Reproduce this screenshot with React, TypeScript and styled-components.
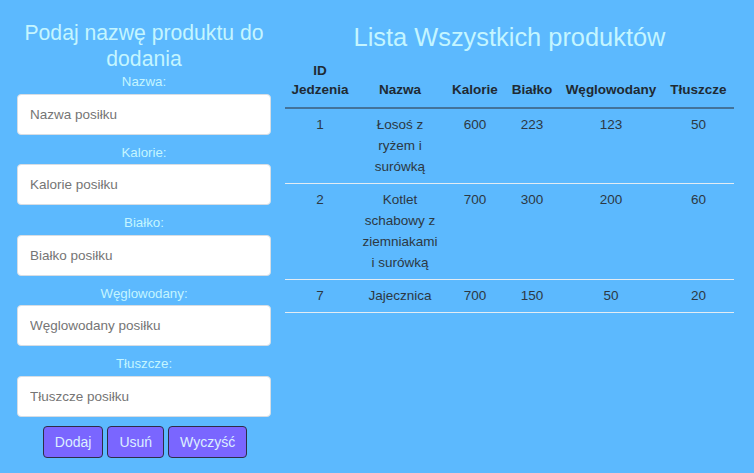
import React from "react";
import styled, { createGlobalStyle } from "styled-components";

const Global = createGlobalStyle`
  html, body { margin: 0; padding: 0; background: #5cb9fe; }
  body { font-family: "Liberation Sans", Arial, sans-serif; }
  * { box-sizing: border-box; }
`;

const Page = styled.div`
  display: flex;
  gap: 14px;
  padding: 0 20px 0 17px;
  min-height: 473px;
  background: #5cb9fe;
`;

const FormColumn = styled.div`
  width: 254px;
  display: flex;
  flex-direction: column;
  align-items: stretch;
`;

const Title = styled.h2<{ $size: number; $lh: number; $top: number }>`
  margin: ${(p) => p.$top}px 0 1px;
  font-weight: 400;
  font-size: ${(p) => p.$size}px;
  line-height: ${(p) => p.$lh}px;
  color: #c4f5ff;
  text-align: center;
`;

const Field = styled.div<{ $first?: boolean }>`
  display: flex;
  flex-direction: column;
  padding-top: ${(p) => (p.$first ? 0 : 9)}px;
`;

const Label = styled.label`
  display: block;
  text-align: center;
  font-size: 13.3px;
  line-height: 18px;
  color: #c4f5ff;
  margin-bottom: 2.5px;
`;

const Input = styled.input`
  height: 41px;
  width: 100%;
  border: 1px solid #d6dde4;
  border-radius: 4px;
  background: #fff;
  padding: 0 12px;
  font-family: "Liberation Sans", Arial, sans-serif;
  font-size: 13.5px;
  color: #333;
  outline: none;
  &::placeholder { color: #757575; }
`;

const Buttons = styled.div`
  display: flex;
  justify-content: center;
  gap: 4px;
  margin-top: 9px;
  padding-left: 2px;
`;

const Button = styled.button`
  height: 32px;
  padding: 0 11px;
  background: #7a66ff;
  border: 1px solid #2e2e46;
  border-radius: 4px;
  color: #dcefff;
  font-family: "Liberation Sans", Arial, sans-serif;
  font-size: 14px;
  cursor: pointer;
`;

const ListColumn = styled.div`
  width: 449px;
  display: flex;
  flex-direction: column;
`;

const Table = styled.table`
  width: 449px;
  table-layout: fixed;
  border-collapse: collapse;
  font-size: 13.5px;
  color: #2c3843;
`;

const Th = styled.th`
  vertical-align: bottom;
  text-align: center;
  font-weight: 700;
  color: #1f2a33;
  padding: 8px 2px 8px;
  line-height: 19px;
  border-bottom: 2px solid #43739a;
`;

const Td = styled.td`
  vertical-align: top;
  text-align: center;
  padding: 5px 6px 6px;
  line-height: 21px;
  border-bottom: 1px solid #e3ecf3;
`;

const cols = [70, 90, 60, 54, 104, 71];
const headers = ["ID Jedzenia", "Nazwa", "Kalorie", "Białko", "Węglowodany", "Tłuszcze"];
const rows = [
  ["1", "Łosoś z ryżem i surówką", "600", "223", "123", "50"],
  ["2", "Kotlet schabowy z ziemniakami i surówką", "700", "300", "200", "60"],
  ["7", "Jajecznica", "700", "150", "50", "20"],
];

const fields = [
  ["Nazwa:", "Nazwa posiłku"],
  ["Kalorie:", "Kalorie posiłku"],
  ["Białko:", "Białko posiłku"],
  ["Węglowodany:", "Węglowodany posiłku"],
  ["Tłuszcze:", "Tłuszcze posiłku"],
];

export default function App() {
  return (
    <>
      <Global />
      <Page>
        <FormColumn>
          <Title $size={21.2} $lh={26} $top={20}>
            Podaj nazwę produktu do dodania
          </Title>
          {fields.map(([label, ph], i) => (
            <Field key={label} $first={i === 0}>
              <Label>{label}</Label>
              <Input placeholder={ph} />
            </Field>
          ))}
          <Buttons>
            <Button>Dodaj</Button>
            <Button>Usuń</Button>
            <Button>Wyczyść</Button>
          </Buttons>
        </FormColumn>
        <ListColumn>
          <Title $size={25.4} $lh={30} $top={22}>
            Lista Wszystkich produktów
          </Title>
          <Table>
            <colgroup>
              {cols.map((w, i) => (
                <col key={i} style={{ width: w }} />
              ))}
            </colgroup>
            <thead>
              <tr>
                {headers.map((h) => (
                  <Th key={h}>{h}</Th>
                ))}
              </tr>
            </thead>
            <tbody>
              {rows.map((r) => (
                <tr key={r[0]}>
                  {r.map((c, i) => (
                    <Td key={i}>{c}</Td>
                  ))}
                </tr>
              ))}
            </tbody>
          </Table>
        </ListColumn>
      </Page>
    </>
  );
}
